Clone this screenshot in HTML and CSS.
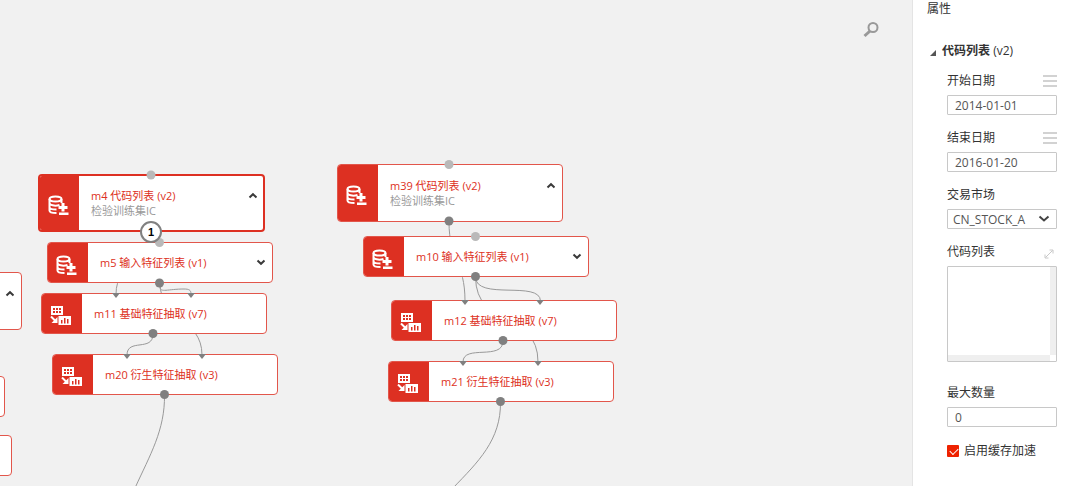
FILE: index.html
```html
<!DOCTYPE html>
<html lang="zh-CN">
<head>
  <meta charset="UTF-8" />
  <meta name="viewport" content="width=device-width, initial-scale=1.0" />
  <title>属性</title>
  <link rel="stylesheet" href="styles.css">
</head>
<body>
  <!-- shared icons -->
  <svg class="defs" aria-hidden="true">
    <symbol id="icon-data" viewBox="0 0 20 20">
      <g fill="none" stroke="#fff" stroke-width="2">
        <ellipse cx="7" cy="4" rx="6" ry="2.600" />
        <path d="M1 4v11.500c0 1.600 3 2.600 7 2.600M13 4v4M1 8c0 2 5 3.500 10 2M1 12c0 1.500 3 2.500 7 2.500" />
      </g>
      <path d="M13 8h3v3h3v3h-3v2.500h-3V14h-3v-3h3zM10.500 17.500H20V20h-9.500z" fill="#fff" />
    </symbol>
    <symbol id="icon-extract" viewBox="0 0 21 20">
      <path d="M1 0h12v9H1z" fill="#fff" />
      <path d="M3 2h2v2H3zM6 2h2v2H6zM9 2h2v2H9zM3 5h2v2H3zM6 5h2v2H6zM9 5h2v2H9z" fill="#dd3022" />
      <path d="M1 10.500l5 5" stroke="#fff" stroke-width="2" />
      <path d="M7.500 11v6h-6z" fill="#fff" />
      <path d="M8.500 10H21v9H8.500z" fill="#fff" />
      <path d="M11 14h1.500v3.500H11zM14 12h1.500v5.500H14zM17 13h1.500v4.500H17z" fill="#dd3022" />
    </symbol>
    <symbol id="icon-up" viewBox="0 0 10 7">
      <path d="M1.500 5.500L5 2.200l3.500 3.300" fill="none" stroke="#3a3a3a" stroke-width="2" />
    </symbol>
    <symbol id="icon-down" viewBox="0 0 10 7">
      <path d="M1.500 1.500L5 4.800l3.500-3.300" fill="none" stroke="#3a3a3a" stroke-width="2" />
    </symbol>
    <symbol id="icon-menu" viewBox="0 0 14 12">
      <path d="M0 1h14M0 6h14M0 11h14" stroke="#d2d2d2" stroke-width="2" />
    </symbol>
    <symbol id="arrow" viewBox="0 0 8 5">
      <path d="M0 0h8L4 5z" fill="#808080" />
    </symbol>
  </svg>

  <div class="app">
    <main class="canvas">
      <svg class="wires">
        <path d="M151 232C151 262 116 262 116 294" />
        <path d="M160 283v4c0 6 8 2 24 2 5 0 7 1 7 5" />
        <path d="M160 283C160 320 202 318 202 355" />
        <path d="M153 334C153 352 127 338 127 355" />
        <path d="M164.500 395C165 430 150 455 135 488" />
        <path d="M449 222C449 260 465 262 465 301" />
        <path d="M475.500 277C476 301 540 280 540.500 301" />
        <path d="M475.500 277C476 330 538 310 538 362" />
        <path d="M503 341C503 361 463 344 463 362" />
        <path d="M500.500 402C501 440 478 462 453 488" />
      </svg>

      <div class="node node-tall edge-1">
        <div class="node-icon"></div>
        <div class="node-body">
          <div class="node-head"><span></span><button class="toggle" aria-label="收起"><svg><use href="#icon-up" /></svg></button></div>
          <div class="node-note">&nbsp;</div>
        </div>
      </div>
      <div class="node edge-2"></div>
      <div class="node edge-3"></div>

      <div class="node node-tall selected m4">
        <div class="node-icon"><svg><use href="#icon-data" /></svg></div>
        <div class="node-body">
          <div class="node-head"><span>m4 代码列表 (v2)</span><button class="toggle" aria-label="收起"><svg><use href="#icon-up" /></svg></button></div>
          <div class="node-note">检验训练集IC</div>
        </div>
      </div>
      <div class="node m5">
        <div class="node-icon"><svg><use href="#icon-data" /></svg></div>
        <div class="node-body">
          <div class="node-head"><span>m5 输入特征列表 (v1)</span><button class="toggle" aria-label="展开"><svg><use href="#icon-down" /></svg></button></div>
        </div>
      </div>
      <div class="node m11">
        <div class="node-icon"><svg><use href="#icon-extract" /></svg></div>
        <div class="node-body"><div class="node-head">m11 基础特征抽取 (v7)</div></div>
      </div>
      <div class="node m20">
        <div class="node-icon"><svg><use href="#icon-extract" /></svg></div>
        <div class="node-body"><div class="node-head">m20 衍生特征抽取 (v3)</div></div>
      </div>

      <div class="node node-tall m39">
        <div class="node-icon"><svg><use href="#icon-data" /></svg></div>
        <div class="node-body">
          <div class="node-head"><span>m39 代码列表 (v2)</span><button class="toggle" aria-label="收起"><svg><use href="#icon-up" /></svg></button></div>
          <div class="node-note">检验训练集IC</div>
        </div>
      </div>
      <div class="node m10">
        <div class="node-icon"><svg><use href="#icon-data" /></svg></div>
        <div class="node-body">
          <div class="node-head"><span>m10 输入特征列表 (v1)</span><button class="toggle" aria-label="展开"><svg><use href="#icon-down" /></svg></button></div>
        </div>
      </div>
      <div class="node m12">
        <div class="node-icon"><svg><use href="#icon-extract" /></svg></div>
        <div class="node-body"><div class="node-head">m12 基础特征抽取 (v7)</div></div>
      </div>
      <div class="node m21">
        <div class="node-icon"><svg><use href="#icon-extract" /></svg></div>
        <div class="node-body"><div class="node-head">m21 衍生特征抽取 (v3)</div></div>
      </div>

      <!-- ports sit over the node borders -->
      <svg class="ports">
        <g fill="#b9b9b9">
          <circle cx="151" cy="175" r="4.500" />
          <circle cx="159.500" cy="242.500" r="4.500" />
          <circle cx="449" cy="164.500" r="4.500" />
          <circle cx="475.500" cy="236.500" r="4.500" />
        </g>
        <g fill="#808080">
          <circle cx="159.500" cy="283" r="4.500" />
          <circle cx="153" cy="333.500" r="4.500" />
          <circle cx="164.500" cy="394.500" r="4.500" />
          <circle cx="449" cy="221" r="4.500" />
          <circle cx="475.500" cy="276.500" r="4.500" />
          <circle cx="503" cy="340.500" r="4.500" />
          <circle cx="500.500" cy="401.500" r="4.500" />
        </g>
        <use href="#arrow" x="112" y="293" width="8" height="5" />
        <use href="#arrow" x="187" y="293" width="8" height="5" />
        <use href="#arrow" x="123" y="354" width="8" height="5" />
        <use href="#arrow" x="198" y="354" width="8" height="5" />
        <use href="#arrow" x="461" y="300" width="8" height="5" />
        <use href="#arrow" x="536" y="300" width="8" height="5" />
        <use href="#arrow" x="459" y="361" width="8" height="5" />
        <use href="#arrow" x="534" y="361" width="8" height="5" />
      </svg>
      <span class="port-badge">1</span>

      <button class="search" aria-label="搜索">
        <svg viewBox="0 0 16 16">
          <circle cx="10" cy="5.500" r="4.500" fill="none" stroke="#999" stroke-width="2" />
          <path d="M7 9L1.500 14" stroke="#999" stroke-width="3" />
        </svg>
      </button>
    </main>

    <aside class="panel">
      <div class="panel-title">属性</div>
      <h2 class="section"><svg viewBox="0 0 6 6"><path d="M6 0v6H0z" fill="#555" /></svg><span><b>代码列表</b> (v2)</span></h2>
      <form class="fields">
        <div class="field">
          <div class="label-row">
            <label for="start">开始日期</label>
            <button type="button" class="menu" aria-label="菜单"><svg><use href="#icon-menu" /></svg></button>
          </div>
          <input type="text" id="start" value="2014-01-01">
        </div>
        <div class="field">
          <div class="label-row">
            <label for="end">结束日期</label>
            <button type="button" class="menu" aria-label="菜单"><svg><use href="#icon-menu" /></svg></button>
          </div>
          <input type="text" id="end" value="2016-01-20">
        </div>
        <div class="field">
          <div class="label-row"><label for="market">交易市场</label></div>
          <select id="market"><option>CN_STOCK_A</option></select>
          <svg class="select-arrow" viewBox="0 0 12 8"><path d="M1.500 1.500L6 5.500l4.500-4" fill="none" stroke="#444" stroke-width="2" /></svg>
        </div>
        <div class="field field-list">
          <div class="label-row">
            <label for="codes">代码列表</label>
            <button type="button" class="expand" aria-label="放大">
              <svg viewBox="0 0 10 10"><path d="M1.500 8.500l7-7M5.500 1h3.500v3.500M1 5.500V9h3.500" fill="none" stroke="#c8c8c8" /></svg>
            </button>
          </div>
          <textarea id="codes"></textarea>
        </div>
        <div class="field">
          <div class="label-row"><label for="max">最大数量</label></div>
          <input type="text" id="max" value="0">
        </div>
        <label class="check"><input type="checkbox" checked>启用缓存加速</label>
      </form>
    </aside>
  </div>
</body>
</html>
```

FILE: styles.css
```css
* {
  box-sizing: border-box;
}
body {
  margin: 0;
  font-family: "Open Sans", "Noto Sans CJK SC", sans-serif;
  font-size: 12px;
  color: #333;
}
button {
  display: flex;
  padding: 0;
  border: none;
  background: none;
  cursor: pointer;
}
.defs {
  position: absolute;
  width: 0;
  height: 0;
}
.app {
  display: flex;
  height: 100vh;
  overflow: hidden;
}

/* canvas */
.canvas {
  position: relative;
  flex: 1;
  overflow: hidden;
  background: #f1f1f1;
}
.wires, .ports {
  position: absolute;
  top: 0;
  left: 0;
  width: 100%;
  height: 100%;
  pointer-events: none;
}
.wires path {
  fill: none;
  stroke: #999;
}
.node {
  position: absolute;
  display: flex;
  width: 226px;
  height: 41px;
  border: 1px solid #e2564b;
  border-radius: 4px;
  background: #fff;
  overflow: hidden;
  font-size: 11px;
  line-height: 15px;
}
.node-tall {
  height: 58px;
}
.selected {
  width: 227px;
  border: 2px solid #dd3022;
}
.node-icon {
  display: flex;
  align-items: center;
  justify-content: center;
  flex: none;
  width: 40px;
  padding: 4px 3px 0 0;
  background: #dd3022;
}
.node-icon svg {
  width: 21px;
  height: 20px;
}
.node-body {
  display: flex;
  flex: 1;
  flex-direction: column;
  justify-content: center;
  padding: 0 6px 0 12px;
}
.selected .node-icon {
  width: 39px;
}
.selected .node-body {
  padding-right: 5px;
}
.node-head {
  display: flex;
  align-items: center;
  justify-content: space-between;
  color: #dd3022;
}
.node-note {
  color: #999;
}
.toggle svg {
  width: 10px;
  height: 7px;
}
.edge-1 { left: -204px; top: 272px; }
.edge-2 { left: -221px; top: 376px; }
.edge-3 { left: -214px; top: 435px; }
.m4 { left: 38px; top: 174px; }
.m5 { left: 47px; top: 242px; }
.m11 { left: 41px; top: 293px; }
.m20 { left: 52px; top: 354px; }
.m39 { left: 337px; top: 164px; }
.m10 { left: 363px; top: 236px; }
.m12 { left: 391px; top: 300px; }
.m21 { left: 388px; top: 361px; }
.port-badge {
  position: absolute;
  left: 140px;
  top: 221px;
  width: 22px;
  height: 22px;
  border: 2px solid #808080;
  border-radius: 50%;
  background: #fff;
  color: #000;
  font: bold 11px/18px "Liberation Sans", sans-serif;
  text-align: center;
}
.search {
  position: absolute;
  top: 22px;
  right: 33px;
}
.search svg {
  width: 16px;
  height: 16px;
}

/* properties panel */
.panel {
  flex: none;
  width: 169px;
  padding: 1px 24px 0 14px;
  border-left: 1px solid #e4e4e4;
  background: #fff;
}
.panel-title {
  margin-bottom: 20px;
  line-height: 15px;
}
.section {
  display: flex;
  align-items: center;
  gap: 6px;
  margin: 0;
  padding-left: 3px;
  font-size: 12px;
  font-weight: normal;
  line-height: 29px;
}
.section svg {
  width: 6px;
  height: 6px;
  margin-top: 4px;
}
.section b {
  font-weight: 600;
}
.fields {
  padding-left: 20px;
}
.field {
  position: relative;
  margin-bottom: 7px;
}
.field-list {
  margin-bottom: 15px;
}
.label-row {
  display: flex;
  align-items: center;
  justify-content: space-between;
  padding-top: 2px;
  line-height: 28px;
}
.menu svg {
  width: 14px;
  height: 12px;
}
.expand {
  padding: 4px 3px 0 0;
}
.expand svg {
  width: 10px;
  height: 10px;
}
input[type="text"], select, textarea {
  display: block;
  width: 100%;
  height: 20px;
  margin: 0;
  padding: 0 7px;
  border: 1px solid #c8c8c8;
  border-radius: 1px;
  background: #fff;
  color: #555;
  font-family: inherit;
  font-size: 12px;
}
select {
  padding: 0 5px;
  appearance: none;
}
.select-arrow {
  position: absolute;
  right: 7px;
  bottom: 6px;
  width: 12px;
  height: 8px;
  pointer-events: none;
}
/* scroll tracks on the right and bottom edges */
textarea {
  height: 96px;
  padding: 0 6px 6px 0;
  background:
    linear-gradient(#efefef, #efefef) right top / 6px calc(100% - 6px) no-repeat,
    linear-gradient(#efefef, #efefef) left bottom / calc(100% - 6px) 6px no-repeat,
    #fff;
  overflow: hidden;
  resize: none;
}
.check {
  display: flex;
  align-items: center;
  gap: 5px;
  line-height: 34px;
}
.check input {
  width: 12px;
  height: 12px;
  margin: 0;
  border-radius: 1px;
  background: #ee2200;
  appearance: none;
}
.check input:checked::before {
  content: "";
  display: block;
  width: 7px;
  height: 4px;
  margin: 3px;
  border-left: 1px solid #fff;
  border-bottom: 1px solid #fff;
  transform: rotate(-45deg);
}
```
